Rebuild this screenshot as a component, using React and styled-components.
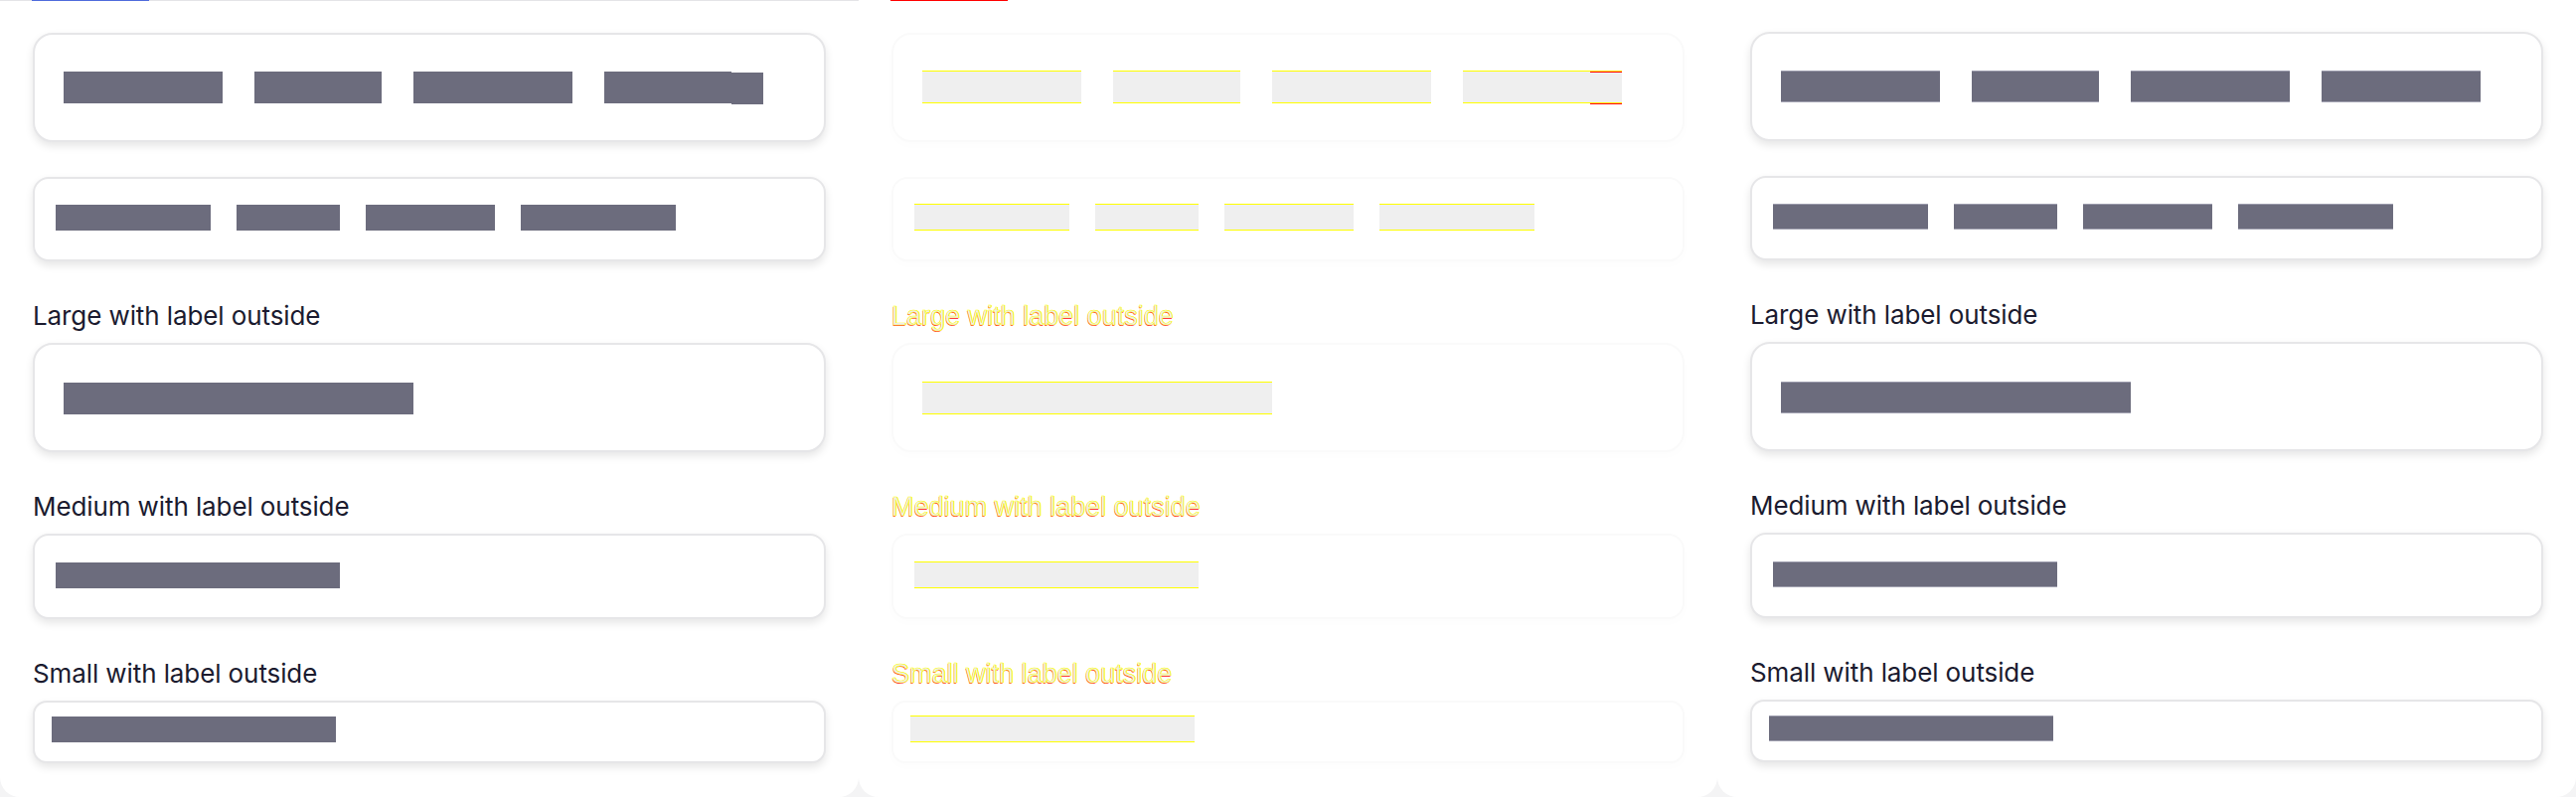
import React from "react";
import styled, { createGlobalStyle, css } from "styled-components";

const GlobalStyle = createGlobalStyle`
  html, body {
    margin: 0;
    padding: 0;
    background: #f4f4f5;
  }
  body {
    width: 2592px;
    height: 802px;
    overflow: hidden;
    font-family: Inter, "Noto Sans", sans-serif;
  }
`;

const Board = styled.div`
  display: grid;
  grid-template-columns: repeat(3, 864px);
  height: 802px;
`;

const Panel = styled.section`
  height: 802px;
  background: #fff;
  border-radius: 0 0 20px 20px;
  overflow: hidden;
`;

const TabRail = styled.div`
  display: flex;
  height: ${(p) => (p.$tone === "soft" ? 0 : 1)}px;
  background: ${(p) => (p.$tone === "solid" ? "#e4e4e7" : "transparent")};
`;

const Indicator = styled.span`
  margin-left: 32px;
  width: 118px;
  height: 1px;
  background: ${(p) => (p.$tone === "diff" ? "#ff0000" : "#4f6bdc")};
  visibility: ${(p) => (p.$tone === "soft" ? "hidden" : "visible")};
`;

const Content = styled.div`
  display: flex;
  flex-direction: column;
  padding: 0 33px;
`;

const sizes = {
  tabsLg: { pad: "37px 29px", radius: 20, top: 32 },
  tabsMd: { pad: "26px 21px 29px", radius: 16, top: 35 },
  lg: { pad: "38px 29px 36px", radius: 20, top: 0 },
  md: { pad: "27px 21px 29px", radius: 16, top: 0 },
  sm: { pad: "14px 17px 19px", radius: 14, top: 0 },
};

const Card = styled.div`
  display: flex;
  align-items: flex-start;
  gap: ${(p) => p.$gap || 0}px;
  margin-top: ${(p) => sizes[p.$size].top}px;
  padding: ${(p) => sizes[p.$size].pad};
  border-radius: ${(p) => sizes[p.$size].radius}px;
  background: #fff;
  ${(p) =>
    p.$tone === "diff"
      ? css`
          border: 2px solid #fafafa;
          box-shadow: 0 4px 10px rgba(0, 0, 0, 0.012);
        `
      : css`
          border: 2px solid #e6e6e8;
          box-shadow: 0 4px 8px rgba(0, 0, 0, 0.1);
        `}
`;

const Bar = styled.span`
  display: flex;
  flex: none;
  width: ${(p) => p.$w}px;
  height: ${(p) => p.$h}px;
  background: #6c6c7d;
  ${(p) =>
    p.$tone === "soft" &&
    css`
      box-shadow: inset 0 1px 0 #9a9aab, inset 0 -1px 0 #a3a3b2;
    `}
  ${(p) =>
    p.$tone === "diff" &&
    css`
      height: ${p.$h + 1}px;
      margin-top: -1px;
      background: #efefef;
      box-shadow: inset 0 1px 0 #ffff00, inset 0 -1px 0 #ffff00;
    `}
`;

const Tail = styled.span`
  margin-left: auto;
  width: 32px;
  height: 100%;
  ${(p) =>
    p.$tone === "solid" &&
    css`
      height: ${p.$h}px;
      margin-top: 1px;
      margin-right: -32px;
      background: #6c6c7d;
    `}
  ${(p) =>
    p.$tone === "diff" &&
    css`
      box-shadow: inset 0 1px 0 #ffff00, inset 0 2px 0 #ff0000, 0 1px 0 #ff0000;
    `}
`;

const Label = styled.div`
  margin: ${(p) => p.$mt}px 0 10px;
  line-height: 34px;
  font-size: 26px;
  letter-spacing: -0.1px;
  color: #1b1b2f;
  white-space: nowrap;
  ${(p) =>
    p.$tone === "diff" &&
    css`
      font-family: "Liberation Sans", Arial, sans-serif;
      font-size: 27px;
      letter-spacing: 0;
      color: #ededed;
      -webkit-text-stroke: 0.45px #ffff00;
      text-shadow: 0.7px 0 0 #ffff00, -0.5px 0.6px 0 rgba(255, 0, 0, 0.75);
    `}
`;

const tabsLg = [160, 128, 160, 160];
const tabsMd = [156, 104, 130, 156];

const sections = [
  { label: "Large with label outside", size: "lg", h: 32, w: 352, mt: 38 },
  { label: "Medium with label outside", size: "md", h: 26, w: 286, mt: 38 },
  { label: "Small with label outside", size: "sm", h: 26, w: 286, mt: 38 },
];

const Shot = ({ tone }) => (
  <Panel>
    <TabRail $tone={tone}>
      <Indicator $tone={tone} />
    </TabRail>
    <Content>
      <Card $size="tabsLg" $gap={32} $tone={tone}>
        {tabsLg.map((w, i) =>
          i === 3 && tone !== "soft" ? (
            <Bar key={i} $w={tone === "solid" ? 128 : w} $h={32} $tone={tone}>
              <Tail $tone={tone} $h={32} />
            </Bar>
          ) : (
            <Bar key={i} $w={w} $h={32} $tone={tone} />
          )
        )}
      </Card>
      <Card $size="tabsMd" $gap={26} $tone={tone}>
        {tabsMd.map((w, i) => (
          <Bar key={i} $w={w} $h={26} $tone={tone} />
        ))}
      </Card>
      {sections.map((s) => (
        <React.Fragment key={s.label}>
          <Label $mt={s.mt} $tone={tone}>
            {s.label}
          </Label>
          <Card $size={s.size} $tone={tone}>
            <Bar $w={s.w} $h={s.h} $tone={tone} />
          </Card>
        </React.Fragment>
      ))}
    </Content>
  </Panel>
);

export default function App() {
  return (
    <>
      <GlobalStyle />
      <Board>
        <Shot tone="solid" />
        <Shot tone="diff" />
        <Shot tone="soft" />
      </Board>
    </>
  );
}
